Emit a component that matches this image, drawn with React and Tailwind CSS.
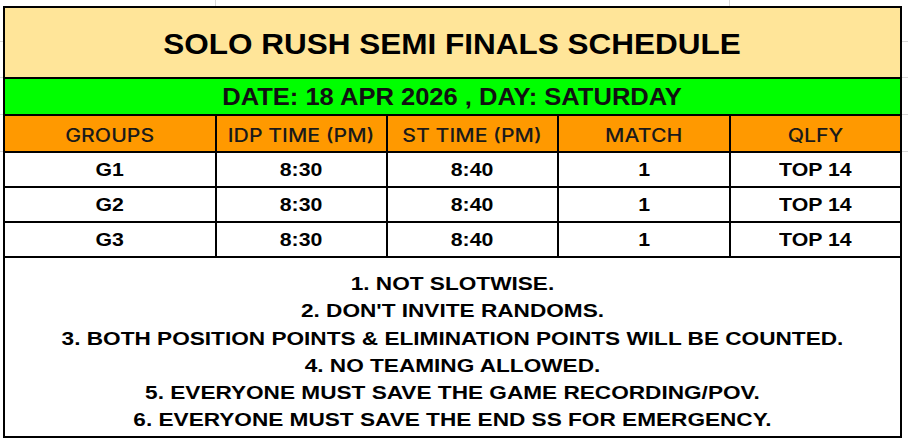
import React from 'react';

const cols = [
    { label: 'GROUPS', w: 'w-[210px]' },
    { label: 'IDP TIME (PM)', w: 'w-[171px] border-l-2' },
    { label: 'ST TIME (PM)', w: 'w-[171px] border-l-2' },
    { label: 'MATCH', w: 'w-[172px] border-l-2' },
    { label: 'QLFY', w: 'w-[171px] border-l-2' },
];

const rows = [
    ['G1', '8:30', '8:40', '1', 'TOP 14'],
    ['G2', '8:30', '8:40', '1', 'TOP 14'],
    ['G3', '8:30', '8:40', '1', 'TOP 14'],
];

const rules = [
    '1. NOT SLOTWISE.',
    "2. DON'T INVITE RANDOMS.",
    '3. BOTH POSITION POINTS & ELIMINATION POINTS WILL BE COUNTED.',
    '4. NO TEAMING ALLOWED.',
    '5. EVERYONE MUST SAVE THE GAME RECORDING/POV.',
    '6. EVERYONE MUST SAVE THE END SS FOR EMERGENCY.',
];

const arial = "font-['Liberation_Sans',Arial,sans-serif]";

// thin gray sheet gridline ticks beside the table
const Ticks = ({ w }) => (
    <div className={`${w} flex flex-col`}>
        <div className="h-[36px] border-b border-[#d9d9d9]"></div>
        <div className="h-[36px] border-b border-[#d9d9d9]"></div>
        <div className="h-[37px] border-b border-[#d9d9d9]"></div>
        <div className="h-[37px] border-b border-[#d9d9d9]"></div>
    </div>
);

const App = () => {
    return (
        <div className="w-[908px] h-[444px] bg-white overflow-hidden">
            <div className="flex h-[6px]">
                <div className="w-[216px] border-r border-[#d9d9d9]"></div>
                <div className="w-[514px] border-r border-[#d9d9d9]"></div>
            </div>
            <div className="flex">
                <Ticks w="w-[3px]" />
                <div className="w-[899px] border-2 border-black text-black">
                    {/* Title */}
                    <div className={`h-[71px] border-b-2 border-black bg-[#ffe599] flex items-center justify-center ${arial} font-bold text-[30px] pt-[1px]`}>
                        <span className="inline-block scale-x-[1.05]">SOLO RUSH SEMI FINALS SCHEDULE</span>
                    </div>
                    {/* Date */}
                    <div className={`h-[37px] border-b-2 border-black bg-[#00ff00] flex items-center justify-center ${arial} font-bold text-[23px] text-[#111] pt-[2px]`}>
                        <span className="inline-block scale-x-[1.11]">DATE: 18 APR 2026 , DAY: SATURDAY</span>
                    </div>
                    {/* Header */}
                    <div className="flex h-[37px] border-b-2 border-black bg-[#ff9900]">
                        {cols.map((c) => (
                            <div key={c.label} className={`${c.w} border-black flex items-center justify-center font-['Inter',sans-serif] font-medium text-[18px] text-[#1a1a1a] pt-[3px]`}>
                                <span className="inline-block scale-x-[1.18]">{c.label}</span>
                            </div>
                        ))}
                    </div>
                    {/* Rows */}
                    {rows.map((r) => (
                        <div key={r[0]} className="flex h-[35px] border-b-2 border-black bg-white">
                            {r.map((v, i) => (
                                <div key={i} className={`${cols[i].w} border-black flex items-center justify-center ${arial} font-bold text-[19px] pt-[1px]`}>
                                    <span className="inline-block scale-x-[1.12]">{v}</span>
                                </div>
                            ))}
                        </div>
                    ))}
                    {/* Rules */}
                    <div className={`h-[178px] bg-white flex justify-center ${arial} font-bold text-[19px] leading-[27.3px] pt-[12px]`}>
                        <div className="flex flex-col items-center scale-x-[1.19]">
                            {rules.map((t) => (
                                <div key={t} className="whitespace-nowrap">{t}</div>
                            ))}
                        </div>
                    </div>
                </div>
                <Ticks w="w-[6px]" />
            </div>
        </div>
    );
};

export default App;
